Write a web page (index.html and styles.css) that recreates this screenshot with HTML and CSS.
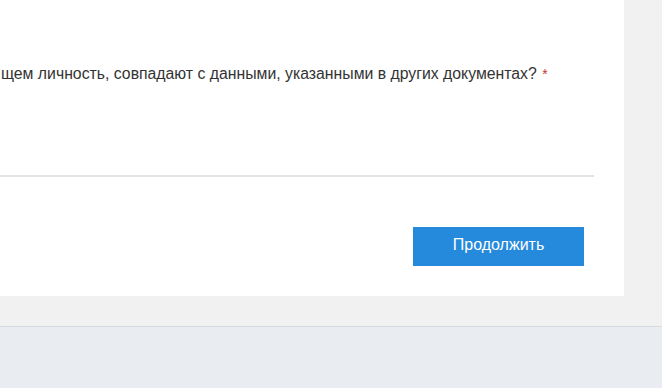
FILE: index.html
```html
<!DOCTYPE html>
<html lang="ru">
<head>
<meta charset="utf-8">
<link rel="stylesheet" href="styles.css">
</head>
<body>
<div class="page">
  <div class="card">
    <div class="question">
      <span class="label">щем личность, совпадают с данными, указанными в других документах?</span>
      <span class="req">*</span>
    </div>
    <div class="divider"></div>
    <div class="actions">
      <button class="btn">Продолжить</button>
    </div>
  </div>
</div>
<div class="footer"></div>
</body>
</html>
```
FILE: styles.css
```css
html, body {
  margin: 0;
  padding: 0;
  background: #f1f1f1;
  font-family: Arial, "Liberation Sans", sans-serif;
}
.page {
  height: 326px;
  background: #f1f1f1;
}
.card {
  width: 624px;
  height: 296px;
  background: #ffffff;
  box-sizing: border-box;
  padding-top: 63px;
}
.question {
  padding-left: 1px;
  font-size: 15.8px;
  line-height: 22px;
  color: #333333;
  height: 112px;
}
.req {
  color: #c0392b;
  font-size: 14px;
  vertical-align: top;
  margin-left: 1px;
}
.divider {
  width: 594px;
  height: 2px;
  background: #e3e3e3;
}
.actions {
  display: flex;
  justify-content: flex-end;
  width: 584px;
  padding-top: 50px;
}
.btn {
  width: 171px;
  height: 39px;
  background: #2589dc;
  border: none;
  color: #ffffff;
  font-family: Arial, "Liberation Sans", sans-serif;
  font-size: 16px;
  padding: 0 0 3px 0;
}
.footer {
  height: 62px;
  background: #e9ecf0;
  border-top: 1px solid #d6dbe0;
}
```
